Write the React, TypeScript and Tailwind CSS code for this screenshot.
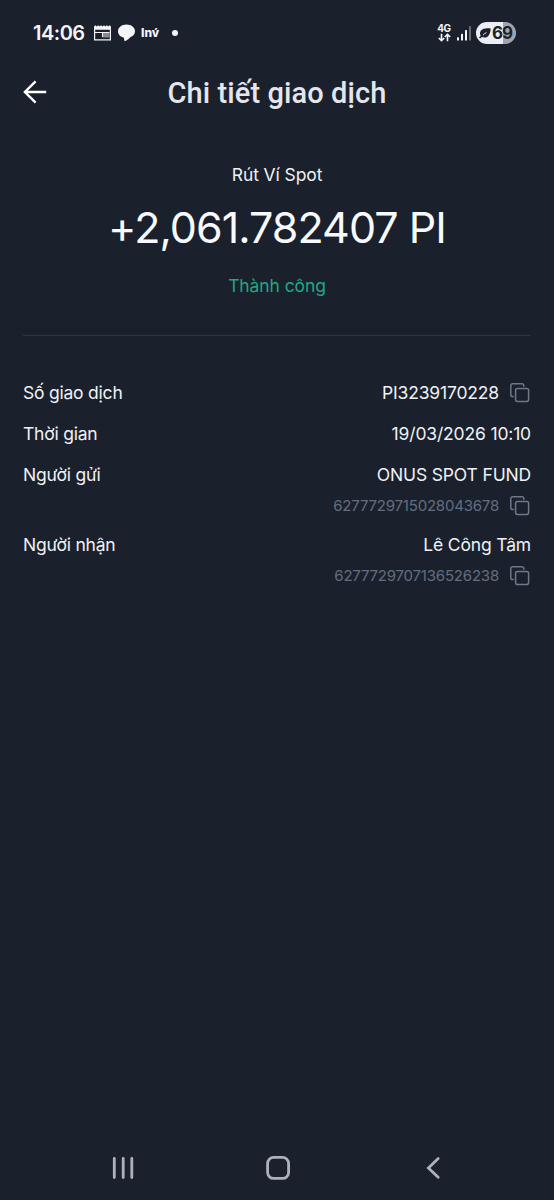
import React from "react";
import clsx from "clsx";

type DetailRowProps = {
  label: string;
  value: string;
  code?: string;
  copyable?: boolean;
};

const CopyIcon = () => (
  <svg
    className="ml-[11px] mr-px h-5 w-5 shrink-0"
    viewBox="0 0 20 20"
    fill="none"
    stroke="#6e7889"
    strokeWidth="1.5"
    strokeLinecap="round"
    strokeLinejoin="round"
  >
    <rect x="5.6" y="5.4" width="13" height="13" rx="1.8" />
    <path d="M3.2 13.5H2.6a1.8 1.8 0 0 1-1.8-1.8V2.6A1.8 1.8 0 0 1 2.6.8H12a1.8 1.8 0 0 1 1.8 1.8v.6" />
  </svg>
);

const DetailRow = ({ label, value, code, copyable }: DetailRowProps) => (
  <div className="flex justify-between">
    <span className="text-[17.5px] leading-6 tracking-[-0.22px]">{label}</span>
    <div className="flex flex-col items-end">
      <div className="flex h-6 items-center">
        <span className="text-[17.5px] leading-6 tracking-[-0.16px]">{value}</span>
        {copyable && <CopyIcon />}
      </div>
      {code && (
        <div className="mt-2 flex h-[21px] items-center text-[#636d7f]">
          <span className="text-[15px] leading-[21px] tracking-[-0.2px]">{code}</span>
          <CopyIcon />
        </div>
      )}
    </div>
  </div>
);

const StatusBar = () => (
  <div className="flex h-[66px] items-center justify-between pl-[33px] pr-[38px] text-[#f3f5f9]">
    <div className="flex items-center">
      <span className="w-[52px] whitespace-nowrap text-[20px] font-semibold leading-6 tracking-[-0.5px]">
        14:06
      </span>
      {/* Calendar notification */}
      <svg className="ml-[9px] h-4 w-[17px]" viewBox="0 0 17 16" fill="none">
        <path d="M.6 2v12.9h15.8V2" stroke="currentColor" strokeWidth="1.2" />
        <path
          d="M0 1.4 1.4.2l1.4 1.2L4.2.2l1.4 1.2L7 .2l1.5 1.2L10 .2l1.4 1.2L12.8.2l1.4 1.2L15.6.2 17 1.4v3.4H0z"
          fill="currentColor"
        />
        <path d="M1 7.5h14.5M8.5 7.5V12" stroke="currentColor" strokeWidth="1" />
        <path d="M8.5 7.5h7v5h-7z" fill="currentColor" fillOpacity=".5" />
      </svg>
      {/* Chat notification */}
      <svg className="ml-[7px] h-[18px] w-[17px]" viewBox="0 0 17 18" fill="currentColor">
        <path d="M8.5.5C3.8.5 0 3.4 0 7.3c0 3.3 2.5 5.6 5.9 6.4.2 1.4.4 2.6.8 3.5 2.4-.8 4.2-2.1 5.5-3.9 2.8-.9 4.8-3.2 4.8-6C17 3.4 13.2.5 8.5.5z" />
      </svg>
      <span className="ml-[6px] w-[19px] whitespace-nowrap text-[12px] font-extrabold leading-4">
        Inv́
      </span>
      <span className="ml-3 h-[6px] w-[6px] rounded-full bg-current" />
    </div>
    <div className="flex items-center">
      <div className="flex w-[14px] flex-col items-center">
        <span className="text-[10px] font-bold leading-[9px] tracking-[-0.3px]">4G</span>
        <svg
          className="h-[9px] w-[13px]"
          viewBox="0 0 13 9"
          fill="none"
          stroke="currentColor"
          strokeWidth="1.6"
        >
          <path d="M3.5.7v6.8M.8 5l2.7 2.7L6.2 5M9.5 8.2V1.5M6.8 4l2.7-2.7L12.2 4" />
        </svg>
      </div>
      <svg className="ml-[6px] h-[15px] w-[15px]" viewBox="0 0 15 15" fill="currentColor">
        <rect x="0" y="11.2" width="2" height="3.3" rx=".6" />
        <rect x="4" y="7.7" width="2" height="6.8" rx=".6" />
        <rect x="8" y="4" width="2" height="10.5" rx=".6" />
        <rect x="12" y="0" width="2" height="14.5" rx=".6" fillOpacity=".35" />
      </svg>
      <div className="ml-1 flex h-[22px] w-10 items-center rounded-full bg-linear-to-r from-[#eceef3] from-[68%] to-[#a0a4ae] to-[68%] pl-[3px] text-[#1b212c]">
        <svg className="h-[11px] w-3 shrink-0" viewBox="0 0 12 11">
          <path
            d="M11.7.4C6 .1 1.3 1 1 5.3c0 1.2.3 2 .7 2.6L0 9.4l1 1.2 2-1.5c4.2 1.6 8.3-.8 8.7-8.7z"
            fill="currentColor"
          />
          <path d="M4 7.2C5 6 6 5.3 7.4 4.6" stroke="#eceef3" strokeWidth="1" fill="none" />
        </svg>
        <span className="ml-px text-[17px] font-bold leading-[22px] tracking-[-1px]">
          69
        </span>
      </div>
    </div>
  </div>
);

const Header = () => (
  <div className="grid h-[54px] grid-cols-[1fr_auto_1fr] items-center px-[23px]">
    <svg
      className="mb-[3px] h-6 w-6"
      viewBox="0 0 24 24"
      fill="none"
      stroke="#ffffff"
      strokeWidth="2.4"
    >
      <path d="M23.2 12H1.8M12.6 1.4 1.9 12l10.7 10.6" />
    </svg>
    <h1 className="font-[Roboto,sans-serif] text-[29px] font-medium leading-[54px] tracking-[0.1px] text-[#e4e6ec]">
      Chi tiết giao dịch
    </h1>
  </div>
);

const Summary = () => (
  <div className="flex flex-col items-center pt-[43px]">
    <p className="text-[17.5px] leading-6 tracking-[-0.1px]">Rút Ví Spot</p>
    <p className="mt-[13px] whitespace-nowrap text-[43px] leading-[54px] tracking-[-0.95px] text-[#f8f9fc]">
      +2,061.782407 PI
    </p>
    <p className="mt-5 text-[17.5px] leading-6 tracking-[-0.1px] text-[#1fa984]">
      Thành công
    </p>
  </div>
);

const NavBar = () => (
  <svg
    className="mt-auto h-16 w-full"
    viewBox="0 0 554 64"
    fill="none"
    stroke="#adb1b8"
    strokeWidth="2.8"
    strokeLinecap="round"
  >
    <path d="M114.3 22.5v19M123.2 22.5v19M131.8 22.5v19" />
    <rect x="267.6" y="21.4" width="21" height="21" rx="6" />
    <path d="m438.2 22.5-9.8 9.4 9.8 9.4" />
  </svg>
);

const details: DetailRowProps[] = [
  { label: "Số giao dịch", value: "PI3239170228", copyable: true },
  { label: "Thời gian", value: "19/03/2026 10:10" },
  { label: "Người gửi", value: "ONUS SPOT FUND", code: "6277729715028043678" },
  { label: "Người nhận", value: "Lê Công Tâm", code: "6277729707136526238" },
];

const App = () => {
  return (
    <div
      className={clsx(
        "flex h-[1200px] w-[554px] flex-col overflow-hidden",
        "bg-[#1b212c] font-[Inter,sans-serif] text-[#eff1f6]"
      )}
    >
      <StatusBar />
      <Header />
      <Summary />
      <div className="mx-[23px] mt-[37px] h-px shrink-0 bg-[#2e3440]" />
      <div className="flex flex-col gap-[17px] px-[23px] pt-[45px]">
        {details.map((item) => (
          <DetailRow key={item.label} {...item} />
        ))}
      </div>
      <NavBar />
    </div>
  );
};

export default App;
